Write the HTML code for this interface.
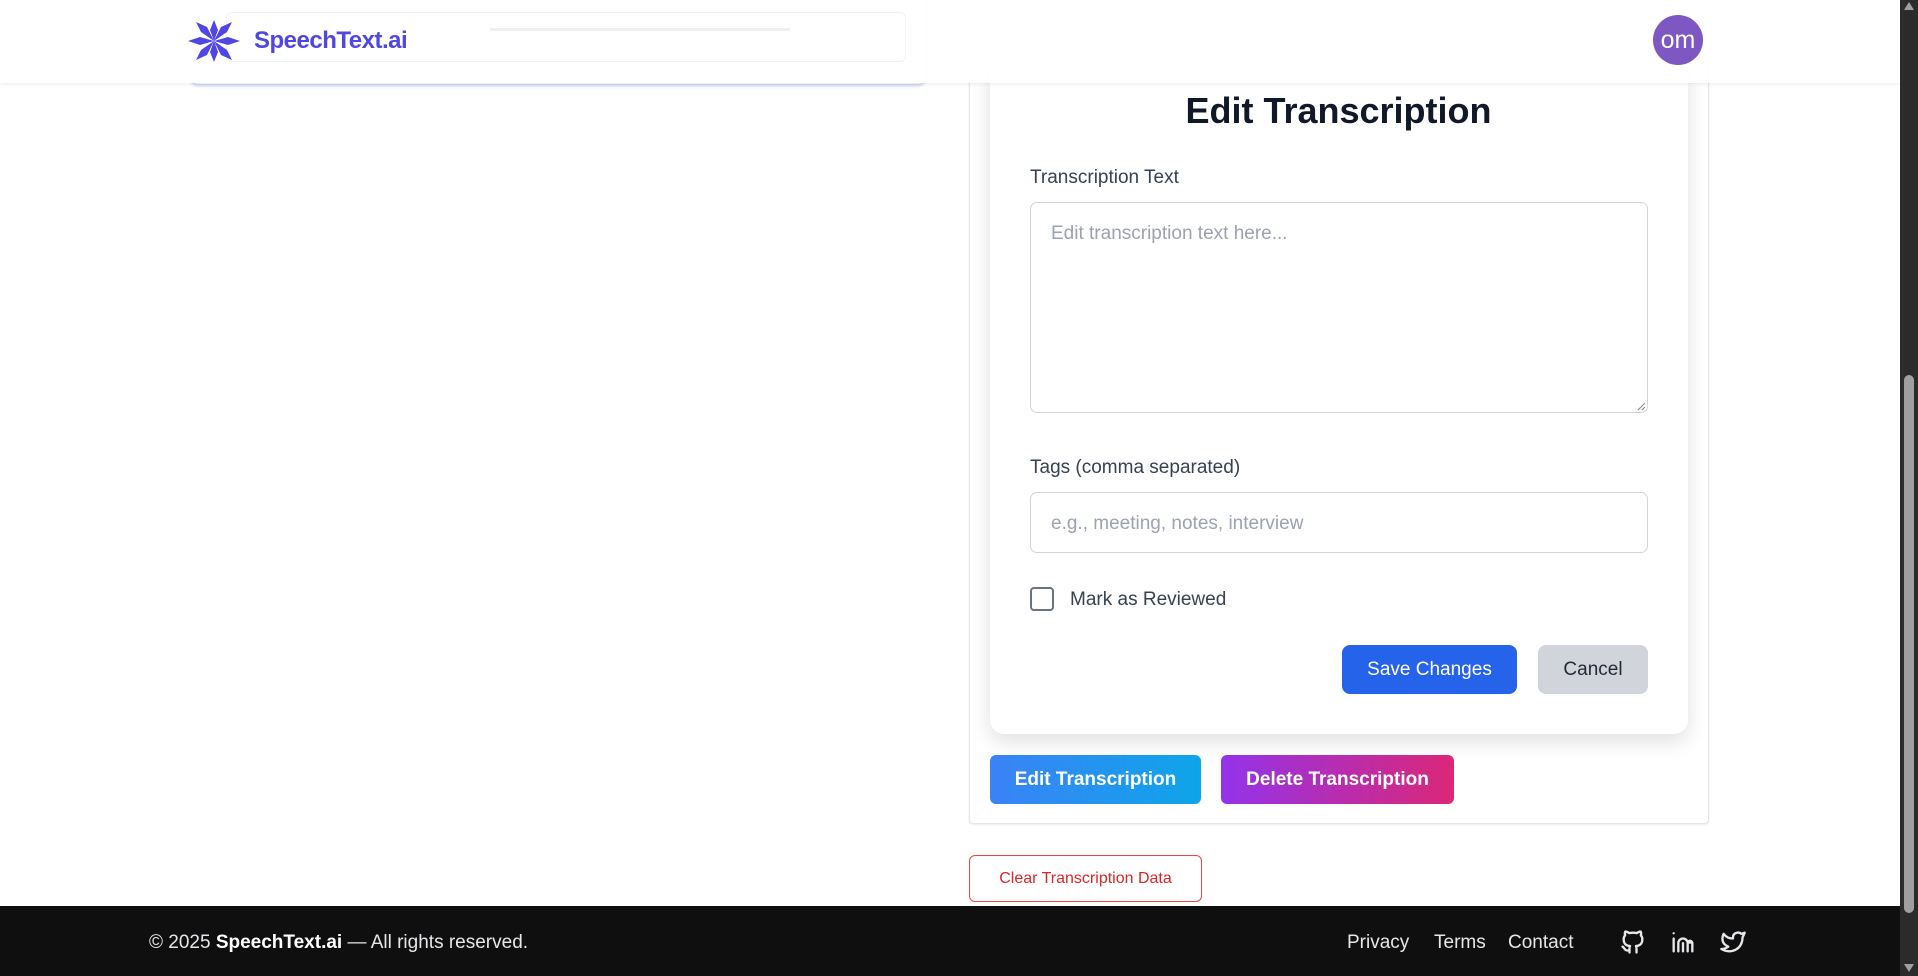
<!DOCTYPE html>
<html><head><meta charset="utf-8"><style>
*{box-sizing:border-box;margin:0;padding:0}
body{width:1918px;height:976px;overflow:hidden;background:#fff;font-family:"Liberation Sans",sans-serif;position:relative;color:#1f2937}
.a{position:absolute}
.btn{position:absolute;border-radius:6px;display:flex;align-items:center;justify-content:center;font-size:19px;color:#fff}
</style></head><body>
<!-- outer card -->
<div class="a" style="left:969px;top:60px;width:740px;height:764px;border:1px solid #e5e7eb;border-top:none;border-radius:0 0 4px 4px;box-shadow:0 1px 2px rgba(0,0,0,0.08)"></div>
<!-- inner card -->
<div class="a" style="left:990px;top:60px;width:698px;height:674px;background:#fff;border-radius:0 0 14px 14px;box-shadow:0 8px 20px rgba(0,0,0,0.12)"></div>
<div class="a" style="left:990px;top:90px;width:697px;text-align:center;font-size:36px;font-weight:bold;color:#111827">Edit Transcription</div>
<div class="a" style="left:1030px;top:167px;font-size:19px;color:#374151">Transcription Text</div>
<div class="a" style="left:1030px;top:202px;width:618px;height:211px;border:1px solid #d1d5db;border-radius:7px"></div>
<div class="a" style="left:1051px;top:223px;font-size:19px;color:#9ca3af">Edit transcription text here...</div>
<svg class="a" style="left:1636px;top:401px" width="10" height="10"><path d="M9 2L2 9M9 6L6 9" stroke="#888" stroke-width="1"/></svg>
<div class="a" style="left:1030px;top:457px;font-size:19px;color:#374151">Tags (comma separated)</div>
<div class="a" style="left:1030px;top:492px;width:618px;height:61px;border:1px solid #d1d5db;border-radius:7px"></div>
<div class="a" style="left:1051px;top:513px;font-size:19px;color:#9ca3af">e.g., meeting, notes, interview</div>
<div class="a" style="left:1030px;top:587px;width:24px;height:24px;border:2px solid #6b7280;border-radius:4px"></div>
<div class="a" style="left:1070px;top:589px;font-size:19px;color:#374151">Mark as Reviewed</div>
<div class="btn" style="left:1342px;top:645px;width:175px;height:49px;background:#2563eb;border-radius:8px">Save Changes</div>
<div class="btn" style="left:1538px;top:645px;width:110px;height:49px;background:#d1d5db;color:#1f2937;border-radius:8px">Cancel</div>
<div class="btn" style="left:990px;top:755px;width:211px;height:49px;background:linear-gradient(90deg,#3b82f6,#0ea5e9);font-weight:bold">Edit Transcription</div>
<div class="btn" style="left:1221px;top:755px;width:233px;height:49px;background:linear-gradient(90deg,#9333ea,#db2777);font-weight:bold">Delete Transcription</div>
<div class="btn" style="left:969px;top:855px;width:233px;height:47px;border:1px solid #ef4444;color:#dc2626;font-size:16px;background:#fff">Clear Transcription Data</div>
<!-- ghost audio card behind header -->
<div class="a" style="left:190px;top:-10px;width:736px;height:94px;background:#f8f9fe;border-radius:8px;box-shadow:0 2px 3px #c7cdf5"></div>
<!-- header -->
<div class="a" style="left:0;top:0;width:1900px;height:83px;background:rgba(255,255,255,0.9);box-shadow:0 1px 4px rgba(0,0,0,0.08)"></div>
<div class="a" style="left:226px;top:12px;width:680px;height:50px;border:1px solid #f0f1f6;border-radius:6px"></div>
<div class="a" style="left:490px;top:28px;width:300px;height:3px;background:#f0f0f3"></div>
<svg class="a" style="left:188px;top:20px" width="52" height="42" viewBox="0 0 52 42">
<g fill="#4f46e5"><polygon points="26,21 22,10 26,0 30,10"/><polygon points="26,21 22,32 26,42 30,32"/><polygon points="26,21 12,17 0,21 12,25"/><polygon points="26,21 40,17 52,21 40,25"/><polygon points="26,21 13,12 8,2 19,7"/><polygon points="26,21 39,12 44,2 33,7"/><polygon points="26,21 13,30 8,40 19,35"/><polygon points="26,21 39,30 44,40 33,35"/></g></svg>
<div class="a" style="left:254px;top:27px;font-size:24px;font-weight:bold;color:#4f46e5;letter-spacing:-0.5px">SpeechText.ai</div>
<div class="a" style="left:1653px;top:15px;width:50px;height:50px;border-radius:50%;background:#7e57c2;color:#fff;font-size:25px;display:flex;align-items:center;justify-content:center">om</div>
<!-- footer -->
<div class="a" style="left:0;top:906px;width:1900px;height:70px;background:#0f0f0f"></div>
<div class="a" style="left:149px;top:932px;font-size:19px;color:#e5e7eb">© 2025 <b style="color:#fff">SpeechText.ai</b> — All rights reserved.</div>
<div class="a" style="left:1347px;top:932px;font-size:19px;color:#e5e7eb">Privacy</div>
<div class="a" style="left:1434px;top:932px;font-size:19px;color:#e5e7eb">Terms</div>
<div class="a" style="left:1508px;top:932px;font-size:19px;color:#e5e7eb">Contact</div>
<svg class="a" style="left:1619px;top:928px" width="28" height="28" viewBox="0 0 24 24" fill="none" stroke="#e5e7eb" stroke-width="2" stroke-linecap="round" stroke-linejoin="round"><path d="M9 19c-4.3 1.4-4.3-2.5-6-3m12 5v-3.5c0-1 .1-1.4-.5-2 2.8-.3 5.5-1.4 5.5-6a4.6 4.6 0 0 0-1.3-3.2 4.2 4.2 0 0 0-.1-3.2s-1.1-.3-3.5 1.3a12.3 12.3 0 0 0-6.2 0C6.5 2.8 5.4 3.1 5.4 3.1a4.2 4.2 0 0 0-.1 3.2A4.6 4.6 0 0 0 4 9.5c0 4.6 2.7 5.7 5.5 6-.6.6-.6 1.2-.5 2V21"/></svg>
<svg class="a" style="left:1669px;top:928px" width="28" height="28" viewBox="0 0 24 24" fill="none" stroke="#e5e7eb" stroke-width="2" stroke-linecap="round" stroke-linejoin="round"><path d="M4 4.5v.01M4 9v11M8 20v-7a4 4 0 0 1 8 0v7M12 20v-7M16 13a4 4 0 0 1 4 0M16 13a2 2 0 0 1 4 0v7"/></svg>
<svg class="a" style="left:1719px;top:928px" width="28" height="28" viewBox="0 0 24 24" fill="none" stroke="#e5e7eb" stroke-width="2" stroke-linecap="round" stroke-linejoin="round"><path d="M22 4.01c-1 .49-1.98.689-3 .99-1.121-1.265-2.783-1.335-4.38-.737S11.977 6.323 12 8v1c-3.245.083-6.135-1.395-8-4 0 0-4.182 7.433 4 11-1.872 1.247-3.739 2.088-6 2 3.308 1.803 6.913 2.423 10.034 1.517 3.58-1.04 6.522-3.723 7.651-7.742a13.84 13.84 0 0 0 .497-3.753C20.18 7.773 21.692 5.25 22 4.009z"/></svg>
<!-- scrollbar -->
<div class="a" style="left:1900px;top:0;width:18px;height:976px;background:#2b2b2b"></div>
<div class="a" style="left:1904px;top:375px;width:10px;height:538px;background:#9f9f9f;border-radius:5px"></div>
<div class="a" style="left:1904px;top:2px;width:0;height:0;border-left:5px solid transparent;border-right:5px solid transparent;border-bottom:8px solid #9f9f9f"></div>
<div class="a" style="left:1904px;top:964px;width:0;height:0;border-left:5px solid transparent;border-right:5px solid transparent;border-top:8px solid #9f9f9f"></div>
</body></html>
